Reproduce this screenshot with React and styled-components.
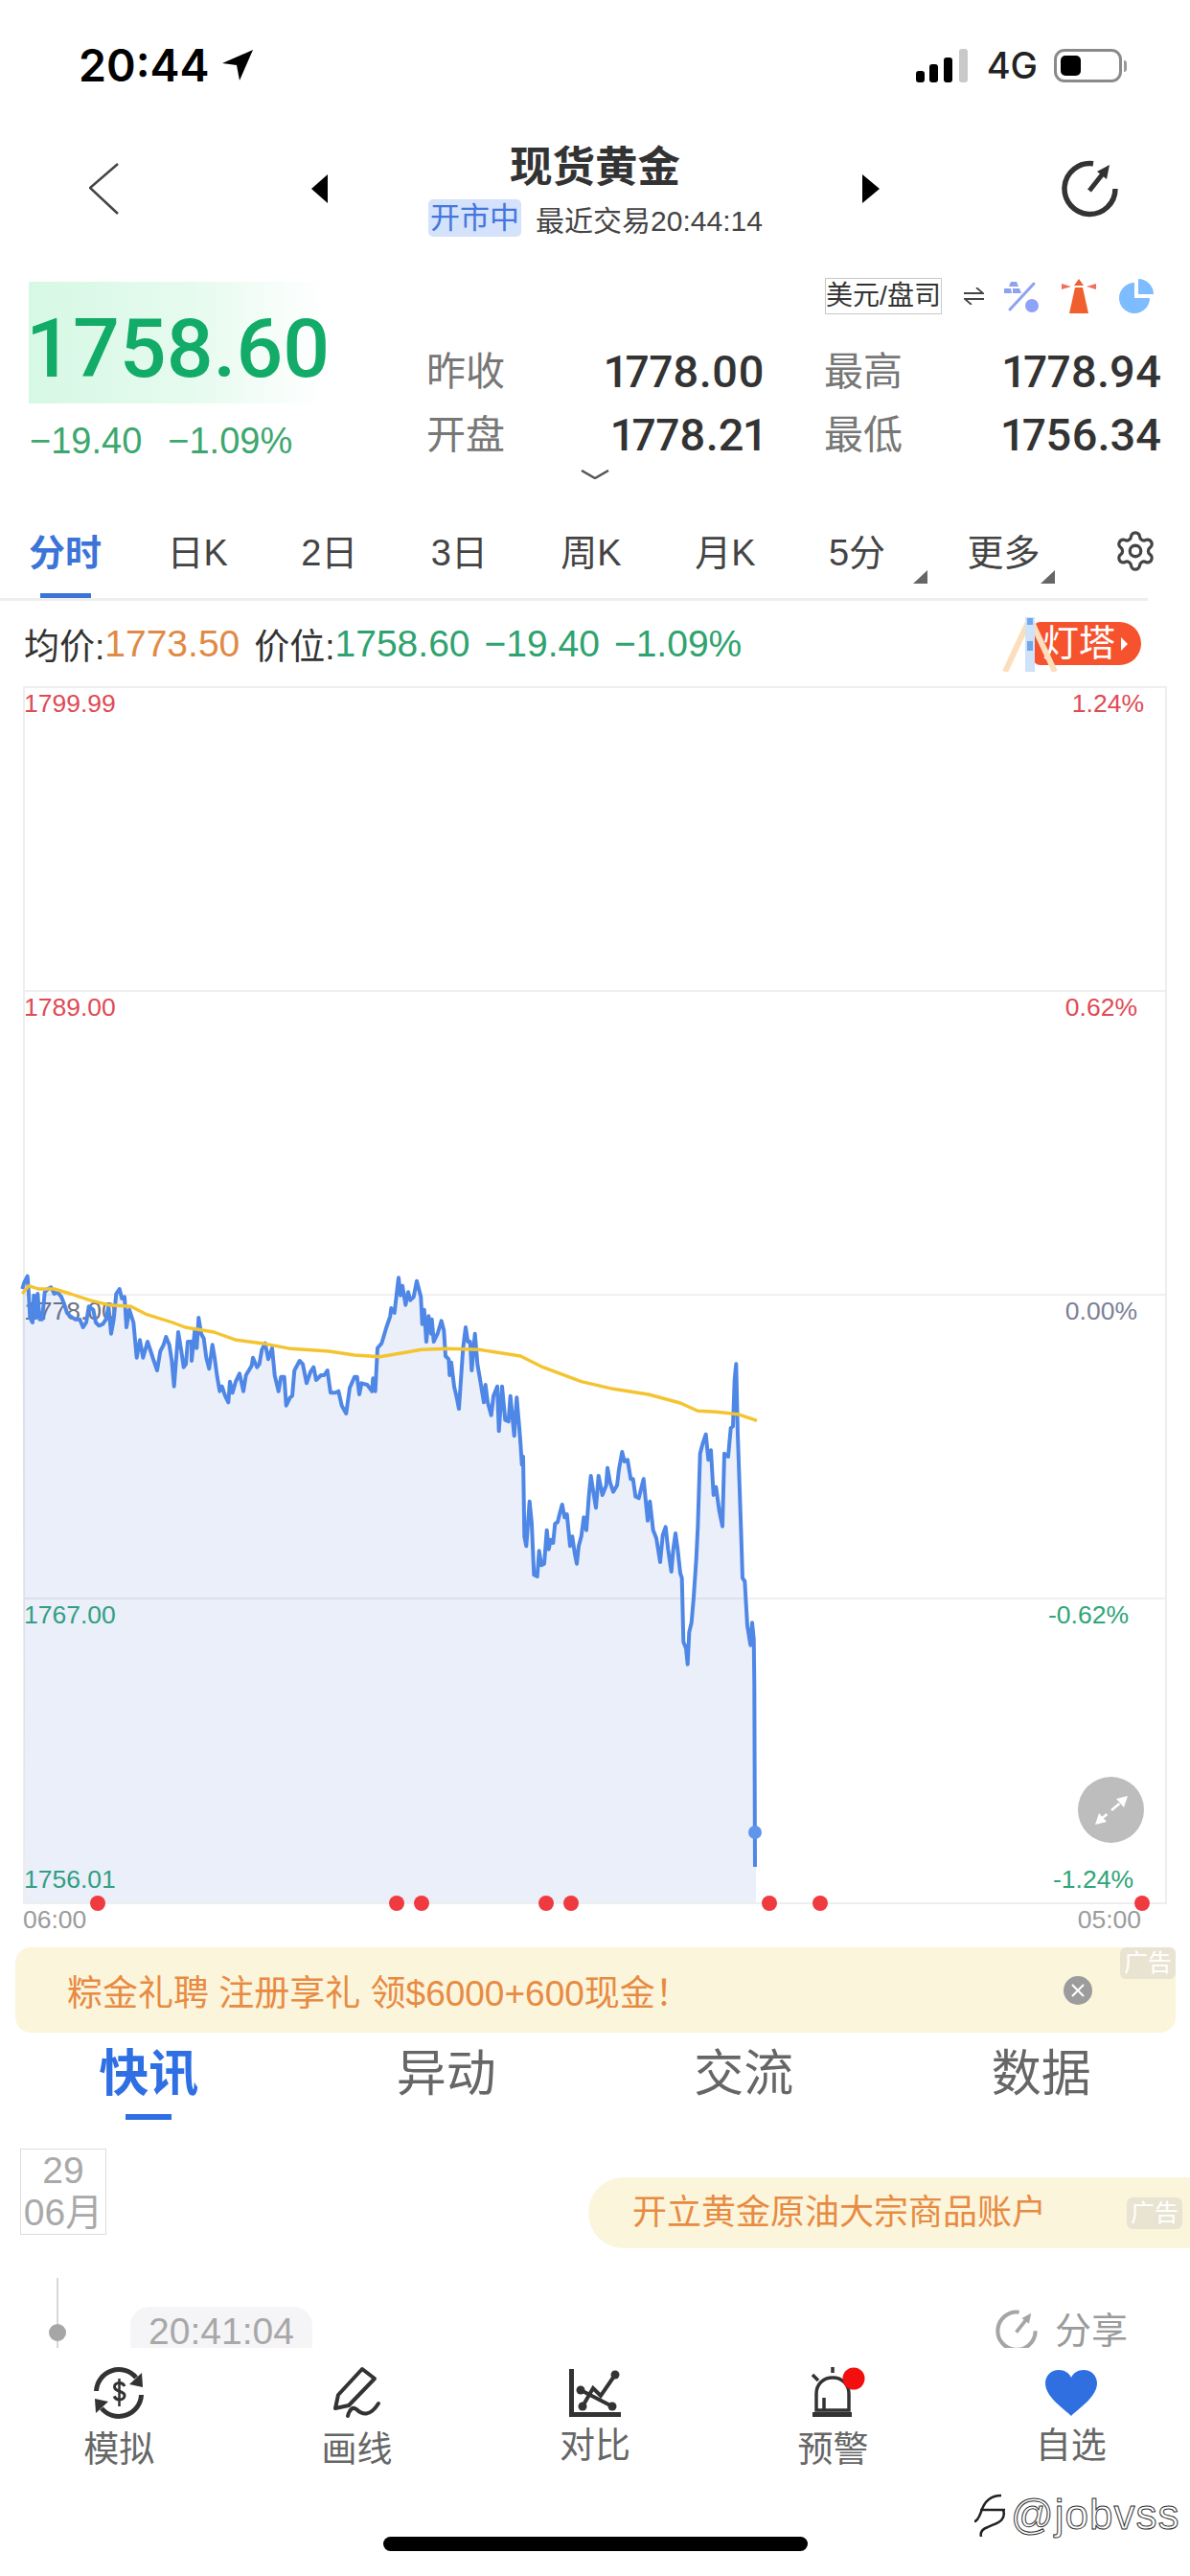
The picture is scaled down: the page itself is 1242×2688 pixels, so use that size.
import React from "react";
import styled, { createGlobalStyle } from "styled-components";
import { Settings } from "lucide-react";

const SANS = `"Liberation Sans", "Noto Sans CJK SC", sans-serif`;
const NUM = `Roboto, "Noto Sans CJK SC", sans-serif`;

const Global = createGlobalStyle`
  html, body { margin: 0; padding: 0; background: #fff; }
  #root { width: 1242px; height: 2688px; }
  * { box-sizing: border-box; }
`;

const Page = styled.div`
  position: relative;
  width: 1242px;
  height: 2688px;
  overflow: hidden;
  background: #fff;
  font-family: ${SANS};
  color: #333;
`;

/* ---------- status bar ---------- */
const StatusBar = styled.div`
  height: 136px;
  padding: 0 71px 0 82px;
  display: flex;
  align-items: center;
`;
const Clock = styled.span`
  font: 600 46.5px/1 Inter, sans-serif;
  color: #000;
  margin-right: 14px;
`;
const StatusRight = styled.div`
  margin-left: auto;
  display: flex;
  align-items: center;
`;
const NetLabel = styled.span`
  font: 500 38px/1 Inter, sans-serif;
  color: #222;
  margin: 0 17px 0 19px;
`;
const Battery = styled.div`
  position: relative;
  width: 71px;
  height: 35px;
  padding: 4px;
  border: 3px solid #8a8a8a;
  border-radius: 11px;
  &::after {
    content: "";
    position: absolute;
    right: -8px;
    top: 9px;
    width: 3px;
    height: 12px;
    border-radius: 0 3px 3px 0;
    background: #9a9a9a;
  }
`;
const BatteryFill = styled.div`
  width: 21px;
  height: 100%;
  background: #000;
  border-radius: 5px;
`;

/* ---------- header ---------- */
const Header = styled.header`
  height: 128px;
  padding: 0 75px 7px 93px;
  display: flex;
  align-items: center;
`;
const Triangle = styled.div`
  width: 0;
  height: 0;
  border-top: 15px solid transparent;
  border-bottom: 15px solid transparent;
  ${(p) =>
    p.$dir === "left"
      ? `border-right: 17px solid #000; margin-left: 201px;`
      : `border-left: 18px solid #000; margin-right: 190px;`}
`;
const HeaderCenter = styled.div`
  flex: 1;
  display: flex;
  flex-direction: column;
  align-items: center;
  gap: 8px;
`;
const Title = styled.h1`
  margin: 2px 0 -2px;
  font: 700 44.5px/54px ${SANS};
  color: #333;
`;
const SubLine = styled.div`
  display: flex;
  align-items: center;
  gap: 15px;
  font-size: 30px;
  color: #444;
  height: 39px;
  margin-left: 1px;
`;
const Chip = styled.span`
  height: 39px;
  width: 97px;
  background: #d4e2fb;
  color: #4476dc;
  border-radius: 5px;
  font-size: 31px;
  line-height: 39px;
  text-align: center;
  white-space: nowrap;
`;

/* ---------- quote ---------- */
const Quote = styled.section`
  display: flex;
  padding: 26px 0 0 30px;
`;
const PriceCol = styled.div`
  width: 310px;
  padding-top: 4px;
`;
const PriceBox = styled.div`
  height: 127px;
  padding-top: 20px;
  background: linear-gradient(90deg, #d6f8e4 0%, #e6fbef 55%, #ffffff 100%);
  font: 500 86px/100px ${NUM};
  color: #12ab68;
  text-indent: -3px;
  white-space: nowrap;
`;
const ChangeRow = styled.div`
  display: flex;
  gap: 27px;
  margin: 21px 0 0 1px;
  font: 400 38px/36px ${SANS};
  color: #3da76e;
  white-space: nowrap;
`;
const StatsCol = styled.div`
  width: 770px;
  margin-left: 105px;
`;
const UnitRow = styled.div`
  height: 38px;
  margin-left: 416px;
  display: flex;
  align-items: center;
`;
const UnitBox = styled.span`
  width: 122px;
  height: 38px;
  border: 1.5px solid #c8c8c8;
  font-size: 28px;
  line-height: 35px;
  color: #333;
  text-align: center;
  white-space: nowrap;
  margin-right: 23px;
`;
const UnitIcon = styled.svg`
  flex: none;
  display: block;
  margin-right: ${(p) => p.$mr || 0}px;
`;
const StatsGrid = styled.div`
  display: grid;
  grid-template-columns: 353px 352px;
  column-gap: 62px;
  margin-top: 25px;
`;
const Stat = styled.div`
  height: 66px;
  display: flex;
  align-items: center;
  justify-content: space-between;
`;
const StatLabel = styled.span`
  font-size: 41px;
  margin-bottom: 5px;
  color: #777;
`;
const StatValue = styled.span`
  font: 500 47px/1 ${NUM};
  font-variant-numeric: proportional-nums;
  margin-top: 2px;
  color: #333;
`;
const MoreRow = styled.div`
  height: 15px;
  display: flex;
  justify-content: center;
  padding-top: 5px;
`;

/* ---------- period tabs ---------- */
const Periods = styled.nav`
  position: relative;
  height: 127px;
  padding: 53px 34px 0 30px;
  display: flex;
  align-items: flex-start;
  justify-content: space-between;
  &::after {
    content: "";
    position: absolute;
    left: 0;
    bottom: 0;
    width: 1198px;
    height: 3px;
    background: #eee;
  }
`;
const Period = styled.span`
  position: relative;
  height: 71px;
  font-size: 38px;
  line-height: 48px;
  white-space: nowrap;
  margin-left: ${(p) => p.$ml || 0}px;
  margin-right: ${(p) => p.$mr || 0}px;
  color: ${(p) => (p.$active ? "#3c74d8" : "#444")};
  font-weight: ${(p) => (p.$active ? 700 : 400)};
  ${(p) =>
    p.$active &&
    `&::after{content:"";position:absolute;left:12px;bottom:0;width:53px;height:5px;background:#3c74d8;z-index:1;}`}
`;
const Corner = styled.i`
  position: absolute;
  right: ${(p) => p.$off}px;
  top: 42px;
  width: 0;
  height: 0;
  border-bottom: 14px solid #666;
  border-left: 15px solid transparent;
`;
const GearWrap = styled.span`
  margin-top: -1px;
  color: #444;
  display: block;
  height: 46px;
`;

/* ---------- info row ---------- */
const InfoRow = styled.div`
  position: relative;
  height: 89px;
  padding: 0 51px 0 25px;
  display: flex;
  align-items: center;
  font-size: 37px;
  white-space: nowrap;
`;
const InfoText = styled.span`
  color: ${(p) => p.$color || "#333"};
  font-size: ${(p) => (p.$num ? 39 : 37)}px;
  margin-left: ${(p) => p.$ml || 0}px;
`;
const BeaconPill = styled.div`
  margin-left: auto;
  width: 113px;
  height: 45px;
  padding-left: 10px;
  border-radius: 8px 23px 23px 8px;
  background: #f5522d;
  color: #fff;
  font-size: 38px;
  line-height: 45px;
  display: flex;
  align-items: center;
  gap: 6px;
`;
const PillArrow = styled.i`
  width: 0;
  height: 0;
  border-top: 7px solid transparent;
  border-bottom: 7px solid transparent;
  border-left: 7px solid #fff;
`;
const BeaconArt = styled.svg`
  position: absolute;
  left: 1045px;
  top: 17px;
`;

/* ---------- chart ---------- */
const Chart = styled.div`
  position: relative;
  margin-left: 24px;
  width: 1194px;
  height: 1271px;
  border: 2px solid #eee;
`;
const GridRow = styled.div`
  height: ${(p) => p.$h || 317}px;
  display: flex;
  flex-direction: column;
  justify-content: space-between;
  padding-bottom: ${(p) => (p.$last ? 8 : 0)}px;
  border-bottom: ${(p) => (p.$last ? "none" : "2px solid #efeff1")};
`;
const LabelLine = styled.div`
  height: 32px;
  display: flex;
  justify-content: space-between;
  font-size: 26.5px;
  line-height: 32px;
  margin-left: -1px;
  padding-right: ${(p) => p.$pr}px;
  color: ${(p) => (p.$tone === "up" ? "#df4a55" : p.$tone === "down" ? "#2fa578" : "#7c8098")};
`;
const LeftTone = styled.span`
  color: ${(p) => (p.$flat ? "#6d7180" : "inherit")};
`;
const PlotSvg = styled.svg`
  position: absolute;
  left: 0;
  top: 0;
  overflow: visible;
`;
const ExpandBtn = styled.div`
  position: absolute;
  right: 22px;
  bottom: 62px;
  width: 69px;
  height: 69px;
  border-radius: 50%;
  background: #bdbdbd;
  display: flex;
  align-items: center;
  justify-content: center;
`;
const Axis = styled.div`
  height: 45px;
  padding: 0 51px 0 24px;
  display: flex;
  justify-content: space-between;
  font-size: 26.5px;
  line-height: 33px;
  color: #9b9b9b;
`;

/* ---------- banner ---------- */
const Banner = styled.div`
  position: relative;
  height: 89px;
  margin: 0 15px 0 16px;
  padding: 0 87px 0 54px;
  border-radius: 16px;
  background: #fbf5dc;
  display: flex;
  align-items: center;
  justify-content: space-between;
  color: #e88b42;
  font-size: 37px;
  white-space: nowrap;
`;
const AdTag = styled.span`
  position: absolute;
  right: ${(p) => p.$r}px;
  top: ${(p) => p.$t}px;
  width: 58px;
  height: 33px;
  border-radius: 6px;
  background: #e9e4d1;
  color: #fff;
  font-size: 25px;
  line-height: 33px;
  text-align: center;
  white-space: nowrap;
`;

/* ---------- section tabs ---------- */
const Sections = styled.nav`
  height: 91px;
  display: grid;
  grid-template-columns: repeat(4, 1fr);
`;
const Section = styled.span`
  position: relative;
  padding-top: 11px;
  text-align: center;
  font-size: 52px;
  line-height: 64px;
  color: ${(p) => (p.$active ? "#2f6fe4" : "#666")};
  font-weight: ${(p) => (p.$active ? 700 : 400)};
  ${(p) =>
    p.$active &&
    `&::after{content:"";position:absolute;left:50%;margin-left:-24px;bottom:0;width:48px;height:6px;background:#2f6fe4;}`}
`;

/* ---------- news ---------- */
const News = styled.section`
  height: 238px;
`;
const NewsTop = styled.div`
  height: 134px;
  display: flex;
  justify-content: space-between;
  align-items: flex-start;
  padding-left: 21px;
`;
const DateBox = styled.div`
  width: 90px;
  height: 90px;
  margin-top: 30px;
  border: 1.5px solid #ddd;
  color: #a9a9a9;
  font-size: 39px;
  line-height: 44px;
  text-align: center;
  white-space: nowrap;
`;
const AdPill = styled.div`
  position: relative;
  width: 628px;
  height: 74px;
  margin-top: 60px;
  padding-left: 46px;
  border-radius: 37px 0 0 37px;
  background: #fbf5dc;
  color: #e88b42;
  font-size: 36px;
  line-height: 74px;
  white-space: nowrap;
`;
const TimelineRow = styled.div`
  display: flex;
  align-items: flex-start;
  padding: 31px 65px 0 51px;
`;
const Rail = styled.div`
  position: relative;
  width: 18px;
  height: 73px;
  flex: none;
  &::before {
    content: "";
    position: absolute;
    left: 8px;
    top: 0;
    width: 2px;
    height: 100%;
    background: #d8d8d8;
  }
  &::after {
    content: "";
    position: absolute;
    left: 0;
    top: 48px;
    width: 18px;
    height: 18px;
    border-radius: 50%;
    background: #a6a6a6;
  }
`;
const TimePill = styled.div`
  margin: 30px 0 0 67px;
  width: 190px;
  height: 43px;
  padding-top: 9px;
  border-radius: 20px 20px 0 0;
  background: #f5f5f7;
  color: #a8a8a8;
  text-align: center;
  font-size: 39px;
  line-height: 34px;
`;
const ShareLink = styled.div`
  margin: 33px 0 0 auto;
  height: 40px;
  display: flex;
  align-items: center;
  gap: 18px;
  color: #9b9b9b;
  font-size: 38px;
  line-height: 40px;
`;
const ShareLabel = styled.span`
  margin-top: 4px;
`;

/* ---------- bottom nav ---------- */
const BottomNav = styled.nav`
  height: 197px;
  padding-top: 20px;
  display: grid;
  grid-template-columns: repeat(5, 1fr);
  align-items: start;
`;
const NavItem = styled.div`
  display: flex;
  flex-direction: column;
  align-items: center;
`;
const NavIcon = styled.svg`
  display: block;
  overflow: visible;
`;
const NavLabel = styled.span`
  margin-top: ${(p) => (p.$up ? 7 : 11)}px;
  font-size: 37px;
  line-height: 44px;
  color: #666;
`;
const HomeBar = styled.div`
  width: 443px;
  height: 15px;
  margin: 0 auto;
  border-radius: 8px;
  background: #000;
`;
const Watermark = styled.div`
  position: absolute;
  left: 1015px;
  top: 2600px;
  display: flex;
  align-items: center;
  gap: 4px;
  color: #fff;
  font-size: 44px;
  line-height: 48px;
  letter-spacing: 1px;
  -webkit-text-stroke: 1px #333;
  white-space: nowrap;
`;

/* ---------- chart data (traced from the reference) ---------- */
const seg = (ox, oy, s) =>
  s
    .trim()
    .split(/\s+/)
    .map((p) => {
      const [a, b] = p.split(",").map(Number);
      return [ox + a / 3, oy + b / 3];
    });

const blue = [
  ...seg(20, 1320, `10,75 16,55 26,35 30,90 34,165 42,180 46,95 52,165 58,90 64,170 72,170 80,85 90,75 100,70 110,90 120,85 132,100 140,120 150,150 160,160 175,170 190,170 200,195 210,180 218,130 232,140 240,180 250,190 262,185 272,170 280,130 288,215 296,170 304,90 314,75 322,105 330,100 336,195 345,140 358,180 368,290 378,235 388,290 402,240 412,270 420,295 432,330 442,270 452,250 460,225 470,250 478,300 485,380 498,210 508,270 515,320 522,310 528,240 540,240 540,300 550,205 556,260 562,165 570,215 578,230 586,290 595,325 605,250 612,290 620,350 628,395 635,380 645,410 655,430 660,365 668,400 678,365 690,340 702,395 710,345 728,315 732,290 745,320 752,310 760,265 770,245 780,295 792,260 800,345 812,395 820,350 830,350 836,440 848,415 855,410 862,330 878,300 888,310 900,370 912,335 922,320 930,360 945,345 955,345 965,330 975,400 990,400 1000,395 1010,440 1024,465 1035,385 1050,350 1058,350 1065,405 1072,370 1090,375 1105,395 1108,355 1115,395 1122,260 1135,245`),
  ...seg(400, 1320, `10,195 22,160 25,135 35,150 42,90 48,40 54,95 60,65 70,125 78,85 85,110 95,100 105,50 118,100 122,185 128,140 135,240 142,160 150,215 152,170 158,240 170,215 182,175 190,205 195,285 205,295 208,345 213,305 222,380 230,415 237,450 250,260 258,195 265,240 272,240 277,330 287,215 295,310 305,370 315,430 320,375 327,430 338,470 345,410 357,380 362,520 372,380 382,485 392,490 398,410 410,535`),
  ...seg(500, 1400, `118,175 126,270 130,320 134,385 138,360 142,610 148,640 158,500 165,570 172,730 182,735 188,655 195,700 204,695 212,590 218,650 224,620 232,630 238,570 246,565 252,540 260,510 268,550 275,540 285,640 292,610 300,665 306,695 312,640 320,610 328,550 336,590 344,480 350,420 356,460 366,520 374,420 386,480 398,450 402,395 410,440 420,470 432,450 438,400 448,345 455,375 465,370 475,430 482,430 490,485 500,490 515,430 528,560 535,500 545,590 555,615 567,690 575,605 584,580 592,650 602,720 608,650 615,600 622,650 630,725 635,740 640,940 648,960 653,1010 658,910 665,880 672,800 680,680 685,580 692,350 700,320 710,290 718,370 726,340 734,480 742,455 752,530 762,578 768,350 780,360 788,270 795,265 800,120 805,70 810,290 820,580 825,740 832,750 840,890 850,950 855,880 860,930 862,1075`),
  [788, 1948],
];
const yellow = [
  ...seg(20, 1320, `10,90 30,65 60,75 110,75 160,90 220,110 280,125 350,130 400,155 480,180 520,195 610,210 680,235 760,245 850,262 970,270 1050,282 1130,287`),
  ...seg(400, 1320, `60,275 120,265 200,262 300,265 430,285 500,320 620,365 720,388 830,405 930,432 985,457 1040,460 1110,467 1170,487`),
];
const toPts = (a) => a.map(([x, y]) => `${x.toFixed(1)},${y.toFixed(1)}`).join(" ");
const area = `26,1985 ${toPts(blue.slice(0, -1))} 789,1800 789,1985`;
const markers = [102, 414, 440, 570, 596, 803, 856, 1192];

const ShareGlyph = ({ w = 59, h = 60, vh = 60, color = "#333" }) => (
  <svg width={w} height={h} viewBox={`0 0 59 ${vh}`} fill="none">
    <path d="M33 3.7A26.5 26.5 0 1 0 56 30" stroke={color} strokeWidth="5.5" />
    <path d="M29 32L44 13" stroke={color} strokeWidth="5" />
    <path d="M50 5L47 20L37 12Z" fill={color} />
  </svg>
);

const PERIODS = [
  { t: "分时", mr: -8 },
  { t: "日K" },
  { t: "2日" },
  { t: "3日" },
  { t: "周K" },
  { t: "月K" },
  { t: "5分", corner: -44 },
  { t: "更多", ml: 9, corner: -16 },
];

export default function App() {
  return (
    <Page>
      <Global />
      <StatusBar>
        <Clock>20:44</Clock>
        <UnitIcon width="34" height="34" viewBox="0 0 34 34">
          <path d="M32 1L0 15L15 17L18 33Z" fill="#000" />
        </UnitIcon>
        <StatusRight>
          <svg width="55" height="35" viewBox="0 0 55 35">
            <rect x="0" y="23" width="9" height="12" rx="3" fill="#000" />
            <rect x="14" y="16" width="9" height="19" rx="3" fill="#000" />
            <rect x="29" y="9" width="9" height="26" rx="3" fill="#000" />
            <rect x="45" y="0" width="9" height="35" rx="3" fill="#c9c9c9" />
          </svg>
          <NetLabel>4G</NetLabel>
          <Battery>
            <BatteryFill />
          </Battery>
        </StatusRight>
      </StatusBar>

      <Header>
        <svg width="31" height="54" viewBox="0 0 31 54" fill="none">
          <path d="M30 1L1 26L30 53" stroke="#444" strokeWidth="2.5" />
        </svg>
        <Triangle $dir="left" />
        <HeaderCenter>
          <Title>现货黄金</Title>
          <SubLine>
            <Chip>开市中</Chip>
            <span>最近交易20:44:14</span>
          </SubLine>
        </HeaderCenter>
        <Triangle $dir="right" />
        <ShareGlyph />
      </Header>

      <Quote>
        <PriceCol>
          <PriceBox>1758.60</PriceBox>
          <ChangeRow>
            <span>−19.40</span>
            <span>−1.09%</span>
          </ChangeRow>
        </PriceCol>
        <StatsCol>
          <UnitRow>
            <UnitBox>美元/盘司</UnitBox>
            <UnitIcon width="21" height="18" viewBox="0 0 21 18" fill="none" $mr="21">
              <path d="M0 6H20L13 0M21 12H1L8 18" stroke="#444" strokeWidth="1.8" />
            </UnitIcon>
            <UnitIcon width="37" height="34" viewBox="0 0 37 34" fill="none" $mr="23">
              <path d="M7 2h6l2 5H5zM0 9h7l1 5H0zM9 9h7l2 5H9z" fill="#8ea2f2" />
              <path d="M31 4L6 31" stroke="#8ea2f2" strokeWidth="3" strokeLinecap="round" />
              <circle cx="29" cy="27" r="7" fill="#8ea2f8" />
            </UnitIcon>
            <UnitIcon width="36" height="36" viewBox="0 0 36 36" $mr="24">
              <path d="M18 0l5 7H13z" fill="#ee5f33" />
              <path d="M14 9h8l6 27H8z" fill="#f0602e" />
              <path d="M0 5l10 3-10 3zM36 5l-10 3 10 3z" fill="#ee7060" />
            </UnitIcon>
            <UnitIcon width="36" height="36" viewBox="0 0 36 36">
              <path d="M16 4A16 16 0 1 0 32 20H16Z" fill="#7dbdff" />
              <path d="M20 0A16 16 0 0 1 36 16H20Z" fill="#7dbdff" />
            </UnitIcon>
          </UnitRow>
          <StatsGrid>
            <Stat>
              <StatLabel>昨收</StatLabel>
              <StatValue>1778.00</StatValue>
            </Stat>
            <Stat>
              <StatLabel>最高</StatLabel>
              <StatValue>1778.94</StatValue>
            </Stat>
            <Stat>
              <StatLabel>开盘</StatLabel>
              <StatValue>1778.21</StatValue>
            </Stat>
            <Stat>
              <StatLabel>最低</StatLabel>
              <StatValue>1756.34</StatValue>
            </Stat>
          </StatsGrid>
        </StatsCol>
      </Quote>
      <MoreRow>
        <svg width="30" height="10" viewBox="0 0 30 10" fill="none">
          <path d="M1 1L15 9L29 1" stroke="#555" strokeWidth="2.5" />
        </svg>
      </MoreRow>

      <Periods>
        {PERIODS.map(({ t, mr, ml, corner }, i) => (
          <Period key={t} $active={i === 0} $mr={mr} $ml={ml}>
            {t}
            {corner !== undefined && <Corner $off={corner} />}
          </Period>
        ))}
        <GearWrap>
          <Settings size={46} strokeWidth={1.7} />
        </GearWrap>
      </Periods>

      <InfoRow>
        <InfoText>均价:</InfoText>
        <InfoText $num $color="#e08a45">1773.50</InfoText>
        <InfoText $ml="15">价位:</InfoText>
        <InfoText $num $color="#2fa36f">1758.60</InfoText>
        <InfoText $num $color="#2fa36f" $ml="15">−19.40</InfoText>
        <InfoText $num $color="#2fa36f" $ml="15">−1.09%</InfoText>
        <BeaconPill>
          灯塔
          <PillArrow />
        </BeaconPill>
        <BeaconArt width="60" height="57" viewBox="0 0 60 57" fill="none">
          <path d="M30 1L4 57M30 1L56 57" stroke="#fbdfbd" strokeWidth="6" />
          <rect x="25" y="0" width="10" height="57" fill="#cfe2f8" />
          <rect x="27" y="25" width="6" height="10" fill="#6fa8ee" />
          <rect x="27" y="1" width="6" height="7" fill="#6fa8ee" />
        </BeaconArt>
      </InfoRow>

      <Chart>
        <GridRow>
          <LabelLine $tone="up" $pr="22">
            <span>1799.99</span>
            <span>1.24%</span>
          </LabelLine>
        </GridRow>
        <GridRow>
          <LabelLine $tone="up" $pr="29">
            <span>1789.00</span>
            <span>0.62%</span>
          </LabelLine>
        </GridRow>
        <GridRow>
          <LabelLine $tone="flat" $pr="29">
            <LeftTone $flat>1778.00</LeftTone>
            <span>0.00%</span>
          </LabelLine>
        </GridRow>
        <GridRow $h="316" $last>
          <LabelLine $tone="down" $pr="38">
            <span>1767.00</span>
            <span>-0.62%</span>
          </LabelLine>
          <LabelLine $tone="down" $pr="33">
            <span>1756.01</span>
            <span>-1.24%</span>
          </LabelLine>
        </GridRow>
        <PlotSvg width="1190" height="1267" viewBox="26 718 1190 1267" fill="none">
          <polygon points={area} fill="rgba(70,110,210,0.115)" />
          <polyline points={toPts(blue)} stroke="#4f87e6" strokeWidth="4" strokeLinejoin="round" />
          <polyline points={toPts(yellow)} stroke="#f4c430" strokeWidth="3.4" strokeLinejoin="round" />
          <circle cx="788" cy="1912" r="7" fill="#5f95ec" />
          {markers.map((x) => (
            <circle key={x} cx={x} cy="1986" r="8" fill="#ef3b40" />
          ))}
        </PlotSvg>
        <ExpandBtn>
          <svg width="34" height="30" viewBox="0 0 34 30" fill="none">
            <path d="M4 26L30 4" stroke="#fff" strokeWidth="2.6" strokeDasharray="11 6" />
            <path d="M34 0L30 12L22 3ZM0 30L4 18L12 27Z" fill="#fff" />
          </svg>
        </ExpandBtn>
      </Chart>
      <Axis>
        <span>06:00</span>
        <span>05:00</span>
      </Axis>

      <Banner>
        <span>粽金礼聘 注册享礼 领$6000+600现金！</span>
        <svg width="30" height="30" viewBox="0 0 30 30" fill="none">
          <circle cx="15" cy="15" r="15" fill="#9c9c9c" />
          <path d="M9 9L21 21M21 9L9 21" stroke="#fff" strokeWidth="2" />
        </svg>
        <AdTag $r="0" $t="0">广告</AdTag>
      </Banner>

      <Sections>
        <Section $active>快讯</Section>
        <Section>异动</Section>
        <Section>交流</Section>
        <Section>数据</Section>
      </Sections>

      <News>
        <NewsTop>
          <DateBox>
            29
            <br />
            06月
          </DateBox>
          <AdPill>
            开立黄金原油大宗商品账户
            <AdTag $r="8" $t="21">广告</AdTag>
          </AdPill>
        </NewsTop>
        <TimelineRow>
          <Rail />
          <TimePill>20:41:04</TimePill>
          <ShareLink>
            <ShareGlyph w={44} h={40} vh={54} color="#a5a5a5" />
            <ShareLabel>分享</ShareLabel>
          </ShareLink>
        </TimelineRow>
      </News>

      <BottomNav>
        <NavItem>
          <NavIcon width="52" height="54" viewBox="0 0 52 54" fill="none" stroke="#333">
            <path d="M2.5 25A23.5 23.5 0 0 1 44 11" strokeWidth="5" />
            <path d="M50 6L51 21L37 18Z" fill="#333" stroke="none" />
            <path d="M49.5 29A23.5 23.5 0 0 1 8 43" strokeWidth="5" />
            <path d="M1 33L15 36L2 48Z" fill="#333" stroke="none" />
            <path d="M32 20c-1-2.5-3-3.5-5.5-3.5-3 0-5 1.7-5 4.2 0 5.6 10.5 3.4 10.5 9 0 2.7-2.3 4.3-5.3 4.3-2.6 0-4.6-1.2-5.5-3.6" strokeWidth="3" />
            <path d="M26.5 12V41" strokeWidth="2.5" />
          </NavIcon>
          <NavLabel>模拟</NavLabel>
        </NavItem>
        <NavItem>
          <NavIcon width="50" height="54" viewBox="0 0 50 54" fill="none" stroke="#333">
            <path d="M30 2L43 12L16 40L2 43L5 29Z" strokeWidth="4" strokeLinejoin="round" />
            <path d="M15 51C17 44 20 41 24 44C30 50 38 52 47 38" strokeWidth="4" strokeLinecap="round" />
          </NavIcon>
          <NavLabel>画线</NavLabel>
        </NavItem>
        <NavItem>
          <NavIcon width="54" height="54" viewBox="0 0 54 54" fill="none" stroke="#333">
            <path d="M2.5 2V49.5H54" strokeWidth="5" />
            <path d="M12 24L45 41M14 41L25 22L33 30L48 8" strokeWidth="4" />
            <g fill="#333" stroke="none">
              <circle cx="12" cy="24" r="4.5" />
              <circle cx="45" cy="41" r="4.5" />
              <circle cx="14" cy="41" r="4.5" />
              <circle cx="48" cy="8" r="4.5" />
            </g>
          </NavIcon>
          <NavLabel $up>对比</NavLabel>
        </NavItem>
        <NavItem>
          <NavIcon width="44" height="54" viewBox="0 0 44 54" fill="none" stroke="#333">
            <path d="M5 45V28C5 18 12 11 22 11S39 18 39 28V45Z" strokeWidth="3.5" />
            <path d="M13 45V32" strokeWidth="3.5" />
            <path d="M1 49.5H42" strokeWidth="5" />
            <path d="M22 0V6M1 8L7 14" strokeWidth="3.5" />
            <circle cx="44" cy="12" r="11.5" fill="#f40f0f" stroke="none" />
          </NavIcon>
          <NavLabel>预警</NavLabel>
        </NavItem>
        <NavItem>
          <NavIcon width="54" height="54" viewBox="0 -3 54 54">
            <path d="M27 48C20 41 0 28 0 14C0 6 6 0 14 0C20 0 25 3 27 8C29 3 34 0 40 0C48 0 54 6 54 14C54 28 34 41 27 48Z" fill="#2f6fe0" />
          </NavIcon>
          <NavLabel $up>自选</NavLabel>
        </NavItem>
      </BottomNav>
      <HomeBar />

      <Watermark>
        <svg width="36" height="46" viewBox="0 0 36 46" fill="none" stroke="#222" strokeWidth="2.5">
          <path d="M30 3C18 3 12 10 9 20C6 28 4 30 2 30M8 18H34M32 18C36 30 24 32 16 36C10 38 8 42 9 46" />
        </svg>
        @jobvss
      </Watermark>
    </Page>
  );
}
